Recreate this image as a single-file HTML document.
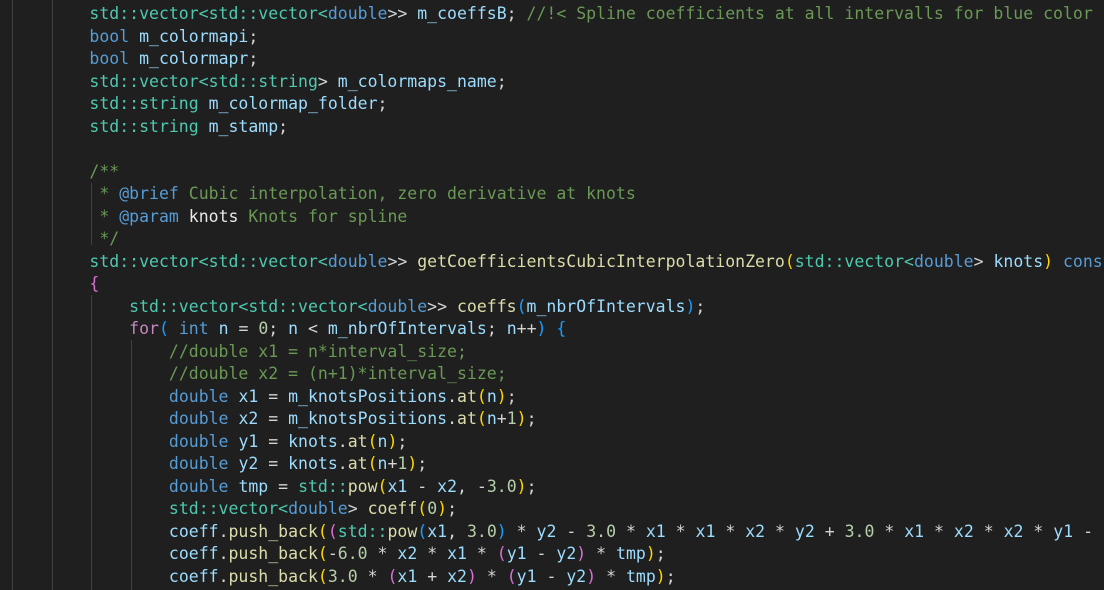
<!DOCTYPE html>
<html><head><meta charset="utf-8"><style>
html,body{margin:0;padding:0;background:#1f1f1f;width:1104px;height:590px;overflow:hidden}
.c{position:absolute;left:0;top:3px;font-family:"DejaVu Sans Mono","Liberation Mono",monospace;font-size:16.5px;line-height:22.5px;color:#d4d4d4;white-space:pre;}
.g{position:absolute;width:1px;background:#404040}
.t{color:#4ec9b0}.k{color:#569cd6}.v{color:#9cdcfe}.f{color:#dcdcaa}.cm{color:#6a9955}.n{color:#b5cea8}.p{color:#c586c0}
.y{color:#ffd700}.m{color:#da70d6}.b{color:#179fff}.w{color:#e8e8e8}
</style></head><body>
<div class="g" style="left:12px;top:0;height:590px"></div>
<div class="g" style="left:52px;top:0;height:590px"></div>
<div class="g" style="left:91px;top:183px;height:62px"></div>
<div class="g" style="left:91px;top:295px;height:295px"></div>
<div class="g" style="left:131px;top:340px;height:250px"></div>
<div class="c">         <span class="t">std::vector&lt;std::vector&lt;</span><span class="k">double</span>&gt;&gt; <span class="v">m_coeffsB</span>; <span class="cm">//!&lt; Spline coefficients at all intervalls for blue color</span>
         <span class="k">bool</span> <span class="v">m_colormapi</span>;
         <span class="k">bool</span> <span class="v">m_colormapr</span>;
         <span class="t">std::vector&lt;std::string</span>&gt; <span class="v">m_colormaps_name</span>;
         <span class="t">std::string</span> <span class="v">m_colormap_folder</span>;
         <span class="t">std::string</span> <span class="v">m_stamp</span>;

         <span class="cm">/**</span>
<span class="cm">          * </span><span class="k">@brief</span><span class="cm"> Cubic interpolation, zero derivative at knots</span>
<span class="cm">          * </span><span class="k">@param</span> <span class="w">knots</span><span class="cm"> Knots for spline</span>
<span class="cm">          */</span>
         <span class="t">std::vector&lt;std::vector&lt;</span><span class="k">double</span>&gt;&gt; <span class="f">getCoefficientsCubicInterpolationZero</span><span class="y">(</span><span class="t">std::vector&lt;</span><span class="k">double</span>&gt; <span class="v">knots</span><span class="y">)</span> <span class="k">const</span>
         <span class="m">{</span>
             <span class="t">std::vector&lt;std::vector&lt;</span><span class="k">double</span>&gt;&gt; <span class="f">coeffs</span><span class="b">(</span><span class="v">m_nbrOfIntervals</span><span class="b">)</span>;
             <span class="p">for</span><span class="b">(</span> <span class="k">int</span> <span class="v">n</span> = <span class="n">0</span>; <span class="v">n</span> &lt; <span class="v">m_nbrOfIntervals</span>; <span class="v">n</span>++<span class="b">)</span> <span class="b">{</span>
                 <span class="cm">//double x1 = n*interval_size;</span>
                 <span class="cm">//double x2 = (n+1)*interval_size;</span>
                 <span class="k">double</span> <span class="v">x1</span> = <span class="v">m_knotsPositions</span>.<span class="f">at</span><span class="y">(</span><span class="v">n</span><span class="y">)</span>;
                 <span class="k">double</span> <span class="v">x2</span> = <span class="v">m_knotsPositions</span>.<span class="f">at</span><span class="y">(</span><span class="v">n</span>+<span class="n">1</span><span class="y">)</span>;
                 <span class="k">double</span> <span class="v">y1</span> = <span class="v">knots</span>.<span class="f">at</span><span class="y">(</span><span class="v">n</span><span class="y">)</span>;
                 <span class="k">double</span> <span class="v">y2</span> = <span class="v">knots</span>.<span class="f">at</span><span class="y">(</span><span class="v">n</span>+<span class="n">1</span><span class="y">)</span>;
                 <span class="k">double</span> <span class="v">tmp</span> = <span class="t">std::</span><span class="f">pow</span><span class="y">(</span><span class="v">x1</span> - <span class="v">x2</span>, -<span class="n">3.0</span><span class="y">)</span>;
                 <span class="t">std::vector&lt;</span><span class="k">double</span>&gt; <span class="f">coeff</span><span class="y">(</span><span class="n">0</span><span class="y">)</span>;
                 <span class="v">coeff</span>.<span class="f">push_back</span><span class="y">(</span><span class="m">(</span><span class="t">std::</span><span class="f">pow</span><span class="b">(</span><span class="v">x1</span>, <span class="n">3.0</span><span class="b">)</span> * <span class="v">y2</span> - <span class="n">3.0</span> * <span class="v">x1</span> * <span class="v">x1</span> * <span class="v">x2</span> * <span class="v">y2</span> + <span class="n">3.0</span> * <span class="v">x1</span> * <span class="v">x2</span> * <span class="v">x2</span> * <span class="v">y1</span> - 
                 <span class="v">coeff</span>.<span class="f">push_back</span><span class="y">(</span>-<span class="n">6.0</span> * <span class="v">x2</span> * <span class="v">x1</span> * <span class="m">(</span><span class="v">y1</span> - <span class="v">y2</span><span class="m">)</span> * <span class="v">tmp</span><span class="y">)</span>;
                 <span class="v">coeff</span>.<span class="f">push_back</span><span class="y">(</span><span class="n">3.0</span> * <span class="m">(</span><span class="v">x1</span> + <span class="v">x2</span><span class="m">)</span> * <span class="m">(</span><span class="v">y1</span> - <span class="v">y2</span><span class="m">)</span> * <span class="v">tmp</span><span class="y">)</span>;
</div>
</body></html>
